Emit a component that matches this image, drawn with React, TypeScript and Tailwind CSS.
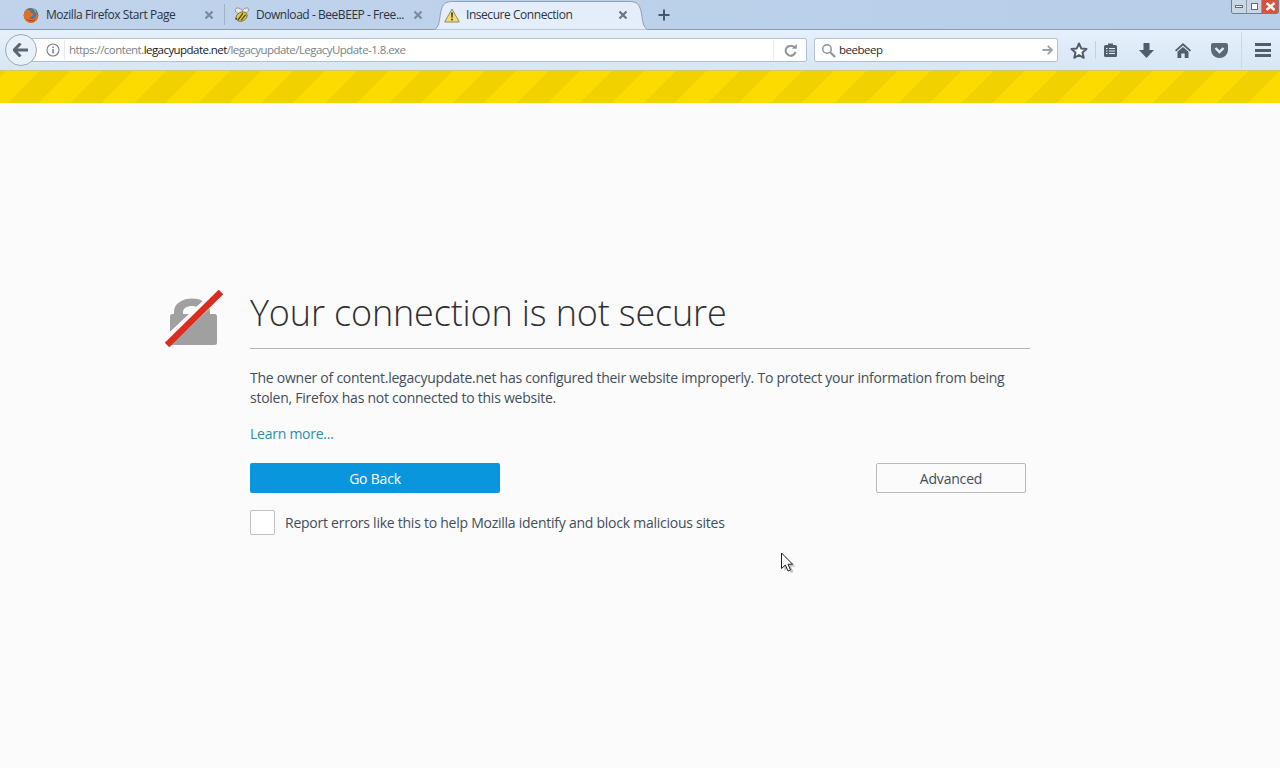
import React from "react";

const f = "font-['Open_Sans','Noto_Sans',sans-serif]";

function Firefox() {
  return (
    <svg width="16" height="16" viewBox="0 0 16 16" className="shrink-0">
      <circle cx="8" cy="8.3" r="7.4" fill="#3b6ea8" />
      <circle cx="8.6" cy="7.6" r="3.6" fill="#4a78b5" />
      <path d="M1 7C1.6 3.6 3.6 1.8 5.6 1.1 5 2.2 5 3 5.4 3.6 6.6 2.6 8.4 2.6 9.4 3 8.2 3.1 7.2 3.9 7 4.9 7.8 5.6 9.6 5.5 9.8 6.6 10.4 9 8 11 5.8 10 7.5 12.6 11.5 12.2 12.6 9.6 13.2 8 13 6.4 12 5 13.6 6 14.6 7 15 8.4 15.2 12.4 12 15.8 8 15.8 3.6 15.8.4 12 1 7Z" fill="#e2701f" />
      <path d="M3 11.5C5 15 10.5 15.3 13.2 12 11.5 13 7 14 3 11.5Z" fill="#c8391c" />
      <path d="M12 5C11 2.6 9 1.4 7 1.3 9.5.8 12.8 2.4 13.6 6 13.2 5.6 12.6 5.2 12 5Z" fill="#f2b01e" />
    </svg>
  );
}

function Bee() {
  return (
    <svg width="18" height="16" viewBox="0 0 18 16" className="shrink-0">
      <ellipse cx="6" cy="4" rx="4" ry="2.6" fill="#e6e8ea" stroke="#8a8f8f" strokeWidth="0.8" transform="rotate(25 6 4)" />
      <ellipse cx="12.5" cy="3.6" rx="3.6" ry="2.3" fill="#e6e8ea" stroke="#8a8f8f" strokeWidth="0.8" transform="rotate(-30 12.5 3.6)" />
      <ellipse cx="8.6" cy="9.6" rx="5.8" ry="4.4" fill="#e9c74a" stroke="#6f6230" strokeWidth="0.8" transform="rotate(-28 8.6 9.6)" />
      <path d="M5 13 10 6.2M8 13.4 12.6 7.8" stroke="#55502c" strokeWidth="1.4" fill="none" />
      <circle cx="3.2" cy="11.8" r="1" fill="#444" />
    </svg>
  );
}

function Warn() {
  return (
    <svg width="16" height="15" viewBox="0 0 16 15" className="shrink-0">
      <path d="M8 1 15.3 14H.7Z" fill="#f6dc6e" stroke="#8f8a6c" strokeWidth="1" strokeLinejoin="round" />
      <path d="M7.1 4.6H8.9L8.6 9.8H7.4Z" fill="#33302a" />
      <rect x="7.2" y="10.7" width="1.6" height="1.7" fill="#33302a" />
    </svg>
  );
}

function Close({ dark }: { dark?: boolean }) {
  return (
    <svg width="10" height="10" viewBox="0 0 10 10" className="shrink-0">
      <path d="M1.5 1.5 8.5 8.5M8.5 1.5 1.5 8.5" stroke={dark ? "#6d7680" : "#7f8b99"} strokeWidth="2.2" />
    </svg>
  );
}

function Lock() {
  return (
    <svg width="60" height="60" viewBox="0 0 60 60">
      <path d="M9 22C9 4 45 4 45 22V24H36V22C36 14 18 14 18 22V24H9Z" fill="#a0a0a0" />
      <rect x="5" y="24" width="47" height="31" rx="2.5" fill="#a0a0a0" />
      <path d="M1.5 52 55 1.5" stroke="#fbfbfb" strokeWidth="10" />
      <path d="M2 55 56 2" stroke="#d92d20" strokeWidth="6.5" />
    </svg>
  );
}

function Cursor() {
  return (
    <svg width="18" height="24" viewBox="0 0 18 24">
      <path d="M3 4V19L7 15.6 9.4 21 12 20 9.6 14.6H14Z" fill="#777" opacity="0.45" transform="translate(1.4 1)" />
      <path d="M1.5 2V17.5L5.4 14 8 20 10.5 19 8 13.2H12.6Z" fill="#fff" stroke="#222" strokeWidth="1" strokeLinejoin="miter" />
    </svg>
  );
}

export default function App() {
  return (
    <div className={`w-[1280px] h-[768px] overflow-hidden flex flex-col bg-[#fbfbfb] ${f}`}>
      {/* tab strip */}
      <div className="h-[30px] shrink-0 flex relative bg-gradient-to-r from-[#c0d3eb] to-[#b8cee9] border-b border-[#8b9aae] text-[12px] text-[#2b3440]">
        <div className="w-[225px] flex items-center pl-[23px] pr-[10px] gap-[7px] border-r border-[#9fb2c9] my-[4px]">
          <Firefox />
          <span className="flex-1 whitespace-nowrap tracking-[-0.45px]">Mozilla Firefox Start Page</span>
          <Close />
        </div>
        <div className="w-[208px] flex items-center pl-[8px] pr-[10px] gap-[5px] my-[4px]">
          <Bee />
          <span className="flex-1 whitespace-nowrap tracking-[-0.45px]">Download - BeeBEEP - Free...</span>
          <Close />
        </div>
        <div className="w-[216px] relative flex items-center pl-[11px] pr-[21px] gap-[6px] mb-[-1px]">
          <svg width="216" height="31" viewBox="0 0 216 31" className="absolute left-0 top-0">
            <path d="M0 30C7 28 6 20 8 11 9.5 4 12 1.5 20 1.5H196C204 1.5 206 4 208 11 210 20 209 28 216 30Z" fill="#e4eefa" stroke="#8f9fb3" strokeWidth="1" />
            <path d="M1 30.6H215" stroke="#e4eefa" strokeWidth="1.4" />
          </svg>
          <span className="relative shrink-0"><Warn /></span>
          <span className="relative flex-1 whitespace-nowrap tracking-[-0.45px]">Insecure Connection</span>
          <span className="relative flex"><Close dark /></span>
        </div>
        <div className="ml-[9px] flex items-center">
          <svg width="12" height="12" viewBox="0 0 12 12"><path d="M6 .5V11.500M.5 6H11.500" stroke="#46586e" strokeWidth="2" /></svg>
        </div>
        {/* window controls */}
        <div className="absolute right-[1px] top-0 h-[14px] w-[48px] flex rounded-b-[3px] border border-t-0 border-[#6f7f93] overflow-hidden">
          <div className="w-[15px] flex items-center justify-center bg-[#c9d6e6] border-r border-[#8d9bad]"><div className="w-[8px] h-[3px] border border-[#5d6b7c] bg-white" /></div>
          <div className="w-[15px] flex items-center justify-center bg-[#c9d6e6] border-r border-[#8d9bad]"><div className="w-[7px] h-[7px] border border-[#5d6b7c] bg-white" /></div>
          <div className="flex-1 flex items-center justify-center bg-[#d5533f]">
            <svg width="11" height="9" viewBox="0 0 11 9"><path d="M1.500 1 9.500 8M9.500 1 1.500 8" stroke="#fff" strokeWidth="2.400" /></svg>
          </div>
        </div>
      </div>

      {/* toolbar */}
      <div className="h-[40px] shrink-0 flex items-center relative bg-gradient-to-b from-[#e5f0fb] to-[#d8e5f3] pl-[5px] text-[12px]">
        <div className="w-[32px] h-[32px] rounded-full border border-[#9aa9bb] bg-[#e8f0f9] flex items-center justify-center shrink-0 z-10">
          <svg width="16" height="14" viewBox="0 0 16 14"><path d="M7.500 .5 1 7l6.500 6.500M1.500 7H15" stroke="#5b6673" strokeWidth="3" fill="none" /></svg>
        </div>
        <div className="-ml-[8px] w-[778px] h-[24px] flex items-center bg-white border border-[#b3c0d0] pl-[16px] rounded-r-[2px]">
          <svg width="14" height="14" viewBox="0 0 14 14" className="shrink-0">
            <circle cx="7" cy="7" r="6" fill="none" stroke="#77808b" strokeWidth="1.100" />
            <rect x="6.300" y="6" width="1.500" height="4.500" fill="#77808b" />
            <rect x="6.300" y="3.500" width="1.500" height="1.500" fill="#77808b" />
          </svg>
          <div className="w-px h-[20px] bg-[#e6e9ed] ml-[4px] mr-[4px]" />
          <span className="flex-1 whitespace-nowrap text-[#7a7f85] tracking-[-0.55px] text-[11.500px]">https://content.<span className="text-[#16181b]">legacyupdate.net</span>/legacyupdate/LegacyUpdate-1.8.exe</span>
          <div className="w-px h-[20px] bg-[#e6e9ed]" />
          <div className="w-[32px] flex items-center justify-center">
            <svg width="13" height="13" viewBox="0 0 13 13"><path d="M10.500 3.500A5 5 0 1 0 11.500 8" fill="none" stroke="#8d949c" strokeWidth="2" /><path d="M8 4.800h4.800V0Z" fill="#8d949c" /></svg>
          </div>
        </div>
        <div className="ml-[7px] w-[244px] h-[24px] flex items-center bg-white border border-[#b3c0d0] pl-[6px] pr-[4px] rounded-[2px] shrink-0">
          <svg width="15" height="15" viewBox="0 0 15 15" className="shrink-0"><circle cx="6" cy="6" r="4.300" fill="none" stroke="#8d949c" strokeWidth="1.500" /><path d="M9.300 9.300 14 14" stroke="#8d949c" strokeWidth="2.200" /></svg>
          <span className="flex-1 ml-[3px] text-[#24282d] tracking-[-0.5px] text-[11.500px]">beebeep</span>
          <svg width="11" height="10" viewBox="0 0 11 10"><path d="M5.800 .8 10 5 5.800 9.200M9.500 5H.5" fill="none" stroke="#9aa1a9" strokeWidth="1.800" /></svg>
        </div>
        <div className="flex items-center text-[#4f5d6d] shrink-0 h-full">
          <svg width="18" height="17" viewBox="0 0 18 17" className="ml-[12px]"><path d="M9 1.500 11.200 6.400 16.500 7 12.500 10.500 13.700 15.800 9 13 4.300 15.800 5.500 10.500 1.500 7 6.800 6.400Z" fill="#fafcfe" stroke="#4f5d6d" strokeWidth="2" strokeLinejoin="round" /></svg>
          <div className="w-px h-[18px] bg-[#c3cfdc] ml-[7px]" />
          <svg width="15" height="16" viewBox="0 0 15 16" className="ml-[7px]"><path d="M1 4.500Q1 3 2.500 3H5V1.500H10V3H12.500Q14 3 14 4.500V13.500Q14 15 12.500 15H2.500Q1 15 1 13.500Z" fill="#4f5d6d" /><path d="M3 6.500H4.500M6 6.500H12M3 9H4.500M6 9H12M3 11.500H4.500M6 11.500H12" stroke="#e5eef8" strokeWidth="1.100" /></svg>
          <svg width="15" height="15" viewBox="0 0 15 15" className="ml-[21px]"><path d="M4.500 0H10.500V7H15L7.500 15 0 7H4.500Z" fill="#4f5d6d" /></svg>
          <svg width="16" height="15" viewBox="0 0 16 15" className="ml-[21px]"><path d="M8 0 16 7.200 14.800 8.500 8 2.500 1.200 8.500 0 7.200Z" fill="#4f5d6d" /><path d="M8 4 13.500 8.800V15H9.700V10.500H6.300V15H2.500V8.800Z" fill="#4f5d6d" /></svg>
          <svg width="17" height="15" viewBox="0 0 17 15" className="ml-[20px]"><path d="M2 0H15Q17 0 17 2V7A8.500 8 0 0 1 0 7V2Q0 0 2 0Z" fill="#5a6878" /><path d="M4.500 5 8.500 9 12.500 5" fill="none" stroke="#e5eef8" strokeWidth="2.400" /></svg>
          <div className="w-px h-[36px] bg-[#ccd8e5] ml-[13px]" />
          <div className="ml-[13px] w-[16px] flex flex-col gap-[2.500px]">
            <div className="h-[3px] bg-[#4f5d6d]" />
            <div className="h-[3px] bg-[#4f5d6d]" />
            <div className="h-[3px] bg-[#4f5d6d]" />
          </div>
        </div>
      </div>

      {/* warning stripes */}
      <div className="h-[33px] shrink-0 border-t border-[#d6c860] bg-[repeating-linear-gradient(-45deg,#fcdc00_0,#fcdc00_23px,#f1d200_23px,#f1d200_45px)]" />

      {/* page */}
      <div className="relative flex-1 pt-[185px] pl-[165px] text-[#424e5a] bg-[#fbfbfb]">
        <div className="flex">
          <div className="w-[85px] shrink-0 pt-[2px]"><Lock /></div>
          <div className="w-[780px]">
            <h1 className="text-[36px] leading-[50px] font-light text-[#2f2f33] tracking-[-0.15px] h-[61px] border-b border-[#b4b4b4] whitespace-nowrap">Your connection is not secure</h1>
            <p className="mt-[19px] text-[14px] leading-[20px] tracking-[-0.25px] w-[770px]">The owner of content.legacyupdate.net has configured their website improperly. To protect your information from being stolen, Firefox has not connected to this website.</p>
            <div className="mt-[16px] text-[14px] leading-[20px] tracking-[-0.25px] text-[#2a8fa8]">Learn more...</div>
            <div className="mt-[19px] w-[776px] flex justify-between">
              <div className="w-[250px] h-[30px] rounded-[2px] bg-[#0996dd] text-white text-[14px] flex items-center justify-center tracking-[-0.2px]">Go Back</div>
              <div className="w-[150px] h-[30px] rounded-[2px] border border-[#b9b9b9] bg-[#fbfbfb] text-[14px] flex items-center justify-center tracking-[-0.2px]">Advanced</div>
            </div>
            <div className="mt-[17px] flex items-center gap-[10px]">
              <div className="w-[25px] h-[25px] rounded-[2px] border border-[#c1c1c1] bg-white" />
              <span className="text-[14px] tracking-[-0.25px] whitespace-nowrap">Report errors like this to help Mozilla identify and block malicious sites</span>
            </div>
          </div>
        </div>
        <div className="absolute left-[780px] top-[448px]"><Cursor /></div>
      </div>
    </div>
  );
}
